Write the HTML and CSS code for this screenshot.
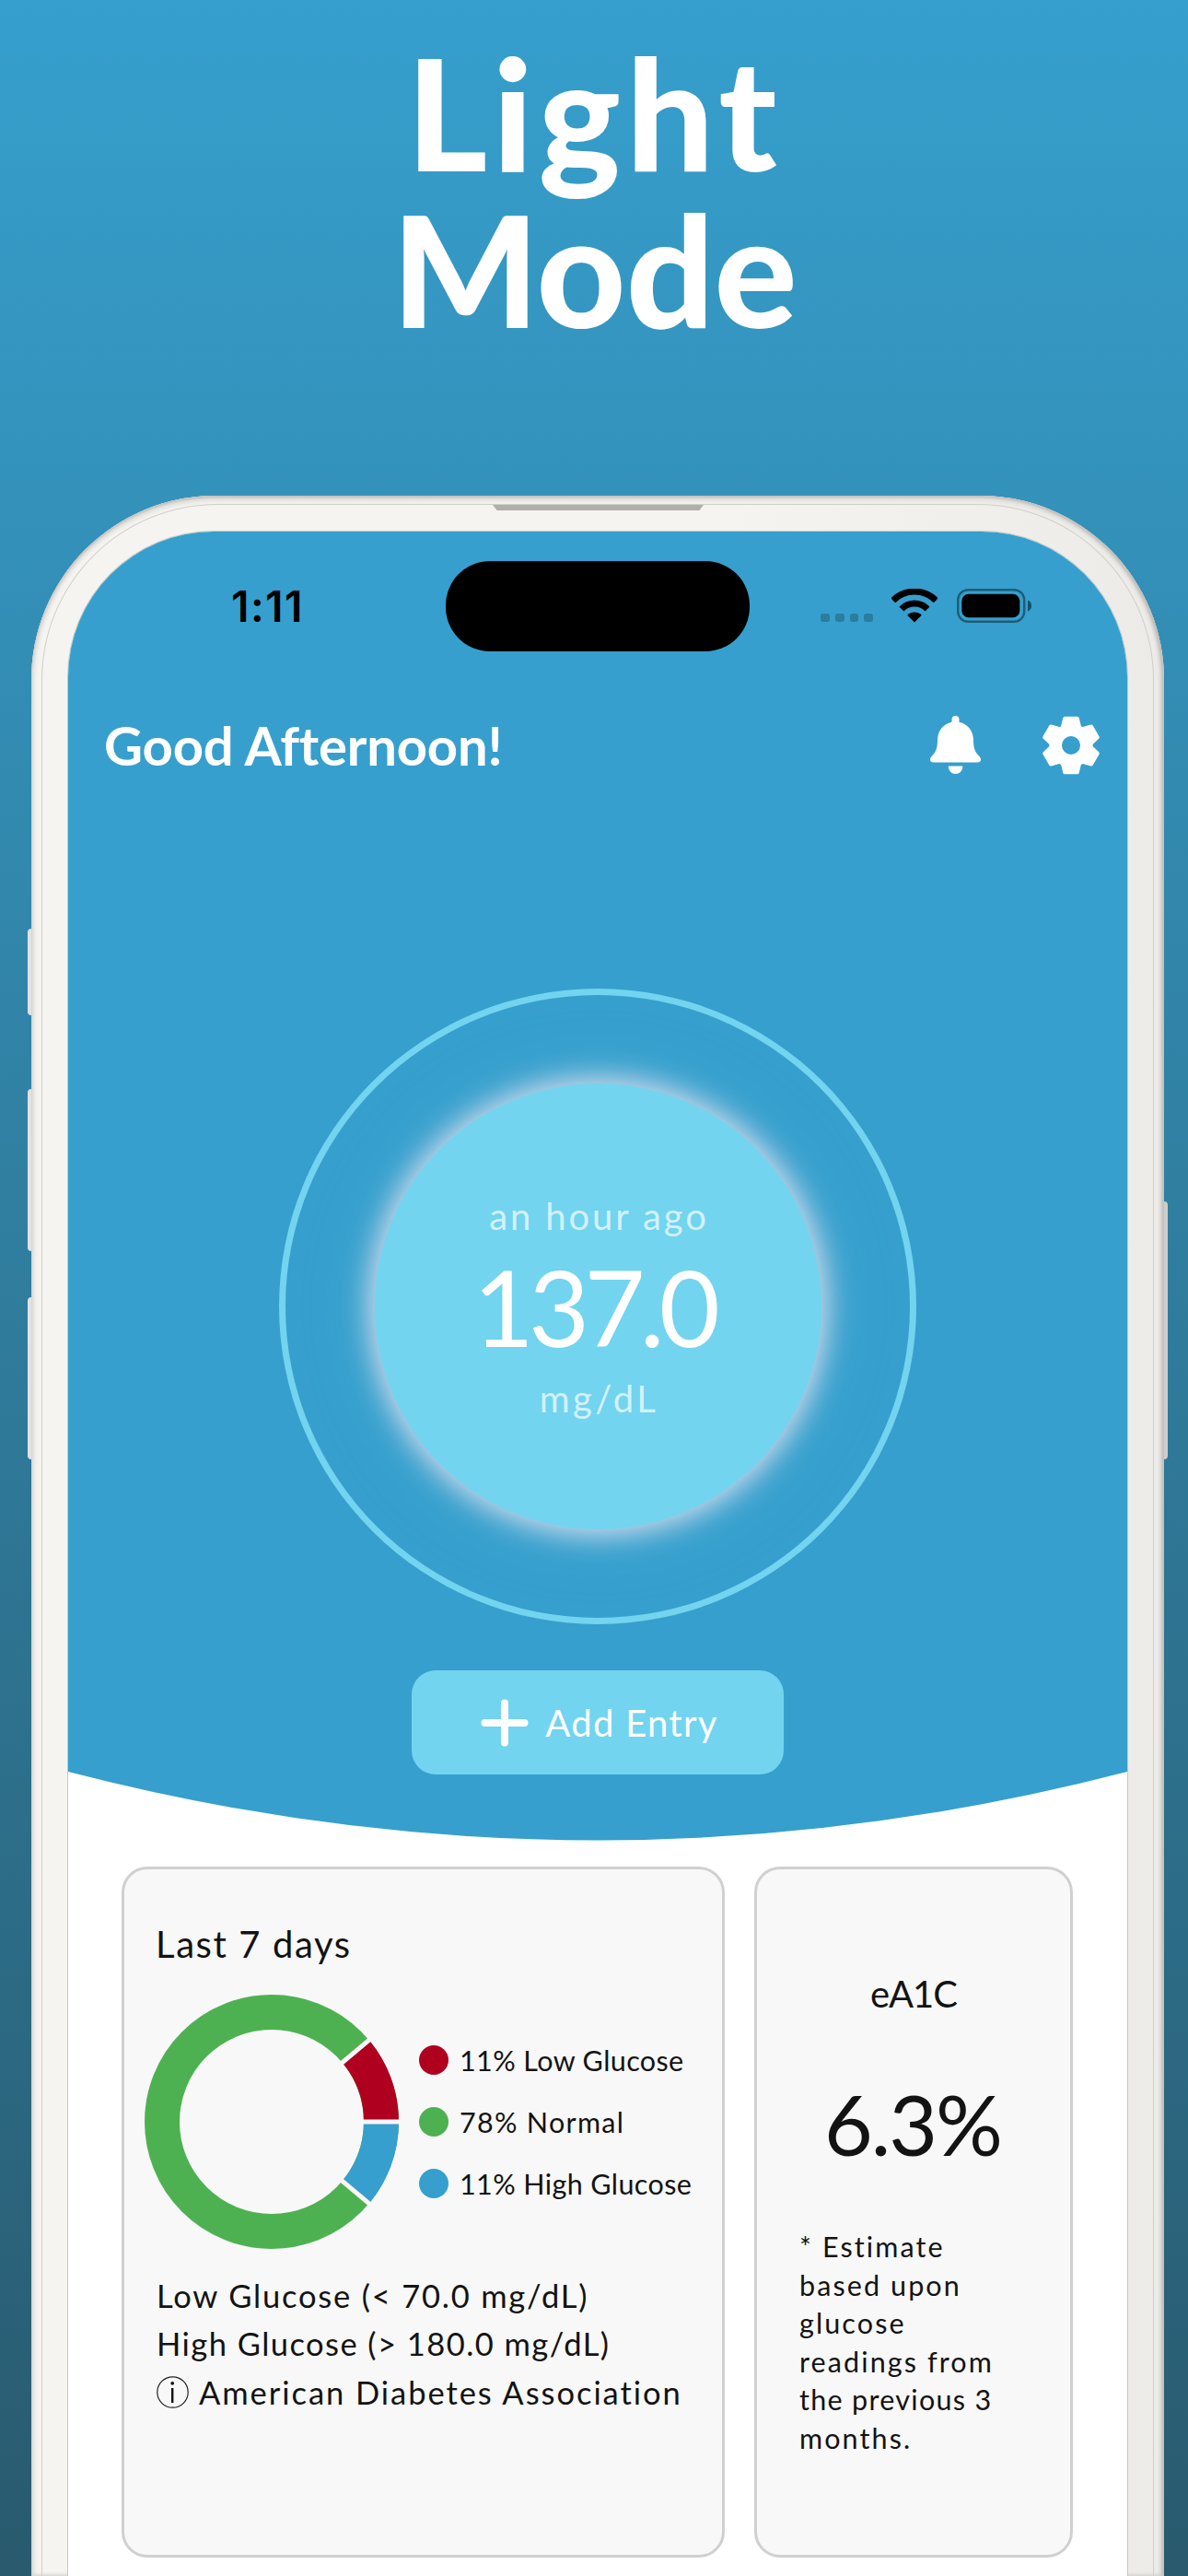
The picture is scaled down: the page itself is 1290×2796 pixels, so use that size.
FILE: index.html
```
<!DOCTYPE html>
<html lang="en">
<head>
    <meta charset="UTF-8">
    <meta name="viewport" content="width=device-width, initial-scale=1.0">
    <title>Light Mode</title>
    <link rel="stylesheet" href="styles.css">
</head>
<body>
    <h1 class="headline"><span class="line-one">Light</span><br>Mode</h1>

    <div class="phone">
        <div class="side-button action"></div>
        <div class="side-button volume-up"></div>
        <div class="side-button volume-down"></div>
        <div class="side-button power"></div>
        <div class="speaker"></div>

        <div class="screen">
            <div class="hero">
                <div class="status-bar">
                    <div class="time">1:11</div>
                    <div class="island"></div>
                    <div class="status-icons">
                        <div class="signal"><i></i><i></i><i></i><i></i></div>
                        <svg class="wifi" width="50" height="37" viewBox="0 0 50 37">
                            <path d="M1.7 12.7a33 33 0 0 1 46.6 0M10.9 21.9a20 20 0 0 1 28.2 0" fill="none" stroke="#000" stroke-width="7"/>
                            <path d="M25 36.5L17.2 28.7a11 11 0 0 1 15.6 0z"/>
                        </svg>
                        <svg width="82" height="37" viewBox="0 0 82 37">
                            <rect x="1.2" y="1.2" width="72" height="34.6" rx="11" fill="none" stroke="#000" stroke-opacity=".42" stroke-width="2.4"/>
                            <rect x="5.3" y="5.8" width="63" height="25.4" rx="7.5"/>
                            <path d="M77 12.5c5.4 1.5 5.4 10.5 0 12z" fill-opacity=".5"/>
                        </svg>
                    </div>
                </div>

                <div class="header">
                    <div class="greeting">Good Afternoon!</div>
                    <div class="header-icons">
                        <svg width="55" height="64" viewBox="0 0 55 64" fill="#fff">
                            <path d="M27.5 0a4 4 0 0 1 4 4v2.8C41 8.800 46.800 16.500 47 26c0 10 2 13.500 6.500 18 3 3.500 1.500 6.500-2 6.500h-48c-3.500 0-5-3-2-6.500C6 39.500 8 36 8 26c.2-9.500 6-17.200 15.500-19.200V4a4 4 0 0 1 4-4z"/>
                            <path d="M19.8 54.500h15.600c0 5-3.600 8.500-7.800 8.500s-7.800-3.500-7.800-8.500z"/>
                        </svg>
                        <svg width="64" height="64" viewBox="-32 -32 64 64" fill="#fff">
                            <defs>
                                <path id="tooth" d="M-9.5-18L-6.800-29.300H6.800L9.500-18z" stroke="#fff" stroke-width="4" stroke-linejoin="round"/>
                            </defs>
                            <use href="#tooth"/>
                            <use href="#tooth" transform="rotate(60)"/>
                            <use href="#tooth" transform="rotate(120)"/>
                            <use href="#tooth" transform="rotate(180)"/>
                            <use href="#tooth" transform="rotate(240)"/>
                            <use href="#tooth" transform="rotate(300)"/>
                            <circle r="16.8" fill="none" stroke="#fff" stroke-width="13.6"/>
                        </svg>
                    </div>
                </div>

                <div class="ring">
                    <div class="reading">
                        <div class="reading-label">an hour ago</div>
                        <div class="reading-value">137.0</div>
                        <div class="reading-label unit">mg/dL</div>
                    </div>
                </div>

                <div class="add-entry">
                    <svg width="52" height="52" viewBox="0 0 52 52">
                        <path d="M26 4.500v43M4.500 26h43" stroke="#fff" stroke-width="8" stroke-linecap="round"/>
                    </svg>
                    <span>Add Entry</span>
                </div>
            </div>

            <div class="cards">
                <div class="card summary">
                    <div class="card-title">Last 7 days</div>
                    <div class="chart-row">
                        <svg width="276" height="276" viewBox="0 0 276 276" fill="none">
                            <circle cx="138" cy="138" r="119" stroke="#4eb151" stroke-width="38"/>
                            <path d="M257 138A119 119 0 0 0 229.200 61.500" stroke="#b00020" stroke-width="38"/>
                            <path d="M257 138A119 119 0 0 1 229.200 214.500" stroke="#369fcd" stroke-width="38"/>
                            <path d="M234 138h44M211.500 76.300L246 47.300M211.500 199.700L246 228.700" stroke="#f8f8f8" stroke-width="5"/>
                        </svg>
                        <div class="legend">
                            <div class="legend-item"><span class="dot low"></span>11% Low Glucose</div>
                            <div class="legend-item normal-item"><span class="dot normal"></span>78% Normal</div>
                            <div class="legend-item"><span class="dot high"></span>11% High Glucose</div>
                        </div>
                    </div>
                    <div class="notes">
                        <div>Low Glucose (&lt; 70.0 mg/dL)</div>
                        <div class="high-note">High Glucose (&gt; 180.0 mg/dL)</div>
                        <div class="source">
                            <svg width="35" height="35" viewBox="0 0 35 35">
                                <circle cx="17.5" cy="17.5" r="16.7" fill="none" stroke="#222" stroke-width="1.2"/>
                                <path d="M17.2 13v16" stroke="#111" stroke-width="2.4"/>
                                <circle cx="17.2" cy="7.8" r="1.9" fill="#111"/>
                            </svg>
                            <span>American Diabetes Association</span>
                        </div>
                    </div>
                </div>

                <div class="card a1c">
                    <div class="a1c-title">eA1C</div>
                    <div class="a1c-value">6.3%</div>
                    <p class="a1c-note">* Estimate<br>based upon<br>glucose<br>readings from<br><span class="tight">the previous 3</span><br>months.</p>
                </div>
            </div>
        </div>
    </div>
</body>
</html>
```
FILE: styles.css
```
* {
    box-sizing: border-box;
}
body {
    margin: 0;
    height: 2796px;
    overflow: hidden;
    font-family: Lato, "Open Sans", sans-serif;
    color: #131313;
    background: linear-gradient(#369fcd, #295a6e);
}
svg {
    display: block;
    flex-shrink: 0;
}
.headline {
    margin: 0;
    padding: 36px 0 0 1px;
    font-size: 168px;
    font-weight: 900;
    line-height: 170px;
    text-align: center;
    color: #fff;
}
.line-one {
    letter-spacing: 6px;
}

/* phone */
.phone {
    position: relative;
    width: 1230px;
    height: 2258px;
    margin: 162px 0 0 34px;
    padding: 39px 40px 0;
    border-radius: 200px 200px 0 0;
    background: linear-gradient(90deg, #f5f4f0 60%, #ecebe7);
    box-shadow: inset 0 2px 2px #c4c2bf, inset 3px 0 4px #dddbd8, inset -3px 0 4px #b9b8b4, inset 0 6px 4px #e2e0dc;
}
.phone::before {
    content: "";
    position: absolute;
    inset: 9px 11px 0;
    border: 1px solid #cfcecb;
    border-bottom: none;
    border-radius: 191px 191px 0 0;
}
.side-button {
    position: absolute;
    left: -4px;
    width: 4px;
    border-radius: 4px 0 0 4px;
    background: #e2e1e3;
}
.action {
    top: 470px;
    height: 94px;
}
.volume-up {
    top: 644px;
    height: 176px;
}
.volume-down {
    top: 870px;
    height: 176px;
}
.power {
    left: auto;
    right: -4px;
    top: 766px;
    height: 280px;
    border-radius: 0 4px 4px 0;
    background: #cfcdca;
}
.speaker {
    position: absolute;
    top: 10px;
    left: 501px;
    width: 229px;
    height: 6px;
    background: #b0afab;
    clip-path: polygon(0 0, 100% 0, 98% 100%, 2% 100%);
}
.screen {
    position: relative;
    height: 2219px;
    border-radius: 158px 158px 0 0;
    background: #fff;
    box-shadow: 0 0 0 1px #c5c8c8;
    overflow: hidden;
}

/* top area */
.hero {
    height: 1421px;
    padding-top: 32px;
    background: #369fcd;
    color: #fff;
    clip-path: path("M0 0H1150V1346Q575 1495 0 1346Z");
}
.status-bar {
    display: grid;
    grid-template-columns: 410px 330px 410px;
    height: 96px;
}
.time {
    padding-left: 177px;
    font: 600 46px/98px Inter, sans-serif;
    letter-spacing: 1.5px;
    color: #000;
}
.island {
    border-radius: 48px;
    background: #000;
}
.status-icons {
    display: flex;
    align-items: center;
    padding: 0 0 2px 77px;
}
.signal {
    display: flex;
    gap: 6px;
    margin: 27px 20px 0 0;
}
.signal i {
    width: 9.8px;
    height: 9.8px;
    border-radius: 3px;
    background: rgba(0, 0, 0, 0.22);
}
.wifi {
    margin-right: 21px;
}
.header {
    display: flex;
    justify-content: space-between;
    height: 64px;
    margin-top: 72px;
    padding: 0 29px 0 39px;
}
.greeting {
    font-size: 58px;
    font-weight: 700;
    line-height: 64px;
    letter-spacing: -0.2px;
}
.header-icons {
    display: flex;
    gap: 66px;
}
.ring {
    display: flex;
    align-items: center;
    justify-content: center;
    width: 692px;
    height: 690px;
    margin: 232px auto 0;
    border: 7px solid #72d4ef;
    border-radius: 50%;
}
.reading {
    width: 485px;
    height: 484px;
    padding-top: 120px;
    border-radius: 50%;
    background: #72d4ef;
    box-shadow: 0 0 30px 6px rgba(255, 235, 242, 0.75), 0 0 70px 8px rgba(120, 205, 238, 0.3);
    text-align: center;
}
.reading-label {
    font-size: 40px;
    line-height: 48px;
    letter-spacing: 2.9px;
    text-indent: 3px;
    color: rgba(255, 255, 255, 0.7);
}
.reading-value {
    margin: 9px 8px 11px 0;
    font-size: 114px;
    line-height: 130px;
    letter-spacing: -5.8px;
}
.unit {
    letter-spacing: 3.4px;
}
.add-entry {
    display: flex;
    align-items: center;
    justify-content: center;
    gap: 18px;
    width: 404px;
    height: 113px;
    margin: 50px auto 0;
    padding-left: 4px;
    border-radius: 26px;
    background: #72d4ef;
    font-size: 40px;
    line-height: 48px;
    letter-spacing: 1.3px;
}

/* cards */
.cards {
    display: flex;
    gap: 32px;
    padding: 28px 59px 0 58px;
}
.card {
    height: 750px;
    border: 3px solid #d0d0d0;
    border-radius: 28px;
    background: #f8f8f8;
}
.summary {
    width: 655px;
    padding: 57px 0 0 22px;
}
.card-title {
    padding-left: 12px;
    font-size: 40px;
    line-height: 48px;
    letter-spacing: 1.6px;
}
.chart-row {
    display: flex;
    align-items: center;
    gap: 22px;
    margin-top: 31px;
}
.legend-item {
    display: flex;
    align-items: center;
    gap: 12px;
    height: 66.7px;
    font-size: 30.5px;
    letter-spacing: 0.4px;
    white-space: nowrap;
}
.normal-item {
    letter-spacing: 1.3px;
}
.dot {
    width: 32px;
    height: 32px;
    border-radius: 50%;
}
.low {
    background: #b00020;
}
.normal {
    background: #4eb151;
}
.high {
    background: #369fcd;
}
.notes {
    margin-top: 25px;
    padding-left: 13px;
    font-size: 34.5px;
    line-height: 52.3px;
    letter-spacing: 1.8px;
    white-space: nowrap;
}
.high-note {
    letter-spacing: 1.45px;
}
.source {
    display: flex;
    align-items: center;
    gap: 11px;
    letter-spacing: 1.95px;
}
.a1c {
    width: 346px;
    padding-top: 111px;
}
.a1c-title {
    font-size: 40px;
    line-height: 48px;
    letter-spacing: -1px;
    text-align: center;
}
.a1c-value {
    margin: 62px 2px 0 0;
    font-size: 91px;
    line-height: 110px;
    letter-spacing: -2px;
    text-align: center;
}
.a1c-note {
    margin: 58px 0 0 46px;
    font-size: 30.5px;
    line-height: 41.6px;
    letter-spacing: 2.1px;
}
.tight {
    letter-spacing: 1.3px;
}
```
